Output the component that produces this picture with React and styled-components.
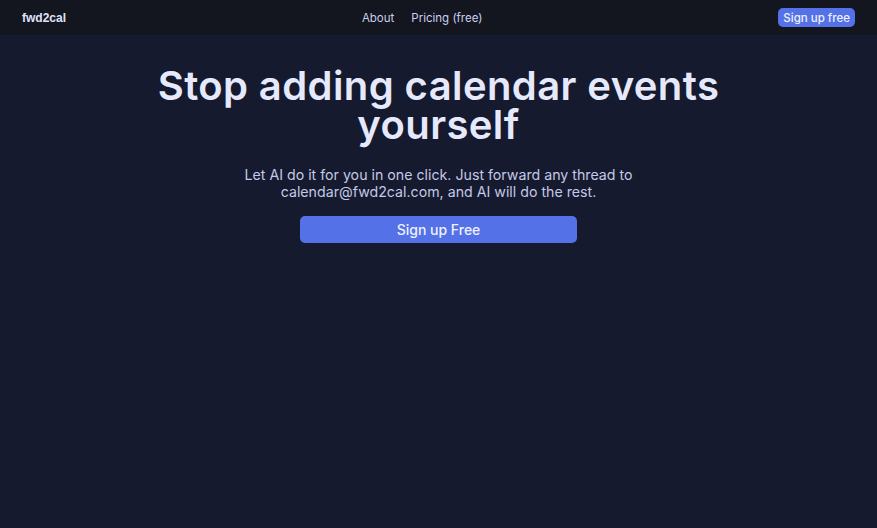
import React from 'react'
import styled, { createGlobalStyle } from 'styled-components'

const GlobalStyle = createGlobalStyle`
  html, body {
    margin: 0;
    padding: 0;
    background: #151a2e;
  }
  body {
    font-family: Inter, "Noto Sans", sans-serif;
    color: #e6e9fb;
  }
`

const Page = styled.div`
  min-height: 528px;
  background: #151a2e;
`

const Header = styled.header`
  height: 35px;
  background: #13151f;
  display: flex;
  justify-content: space-between;
  align-items: center;
  padding: 0 22px;
`

const Logo = styled.div`
  font-family: "Liberation Sans", Arial, sans-serif;
  font-weight: 700;
  font-size: 12px;
  color: #dfe4f7;
`

const Nav = styled.nav`
  display: flex;
  gap: 17px;
`

const NavLink = styled.a`
  font-size: 11.5px;
  color: #c9d0ee;
  text-decoration: none;
`

const Button = styled.button`
  border: none;
  background: #5471e7;
  color: #eef1fd;
  font-family: Inter, "Noto Sans", sans-serif;
  font-weight: 500;
  cursor: pointer;
  border-radius: 5px;
  font-size: ${p => (p.$small ? '11.5px' : '14px')};
  height: ${p => (p.$small ? '19px' : '27px')};
  width: ${p => (p.$small ? 'auto' : '277px')};
  padding: ${p => (p.$small ? '0 5px' : '0')};
`

const Hero = styled.main`
  display: flex;
  flex-direction: column;
  align-items: center;
  padding-top: 31px;
`

const Title = styled.h1`
  margin: 0;
  font-size: 40px;
  font-weight: 600;
  line-height: 39px;
  text-align: center;
  color: #e6e9fb;
  max-width: 620px;
  letter-spacing: 0.4px;
`

const Subtitle = styled.p`
  margin: 22px 0 16px;
  font-size: 14.2px;
  line-height: 17px;
  text-align: center;
  color: #c3c9e6;
  max-width: 420px;
`

export default function App() {
  return (
    <Page>
      <GlobalStyle />
      <Header>
        <Logo>fwd2cal</Logo>
        <Nav>
          <NavLink href="#">About</NavLink>
          <NavLink href="#">Pricing (free)</NavLink>
        </Nav>
        <Button $small>Sign up free</Button>
      </Header>
      <Hero>
        <Title>Stop adding calendar events yourself</Title>
        <Subtitle>
          Let AI do it for you in one click. Just forward any thread to calendar@fwd2cal.com, and AI will do the rest.
        </Subtitle>
        <Button>Sign up Free</Button>
      </Hero>
    </Page>
  )
}
